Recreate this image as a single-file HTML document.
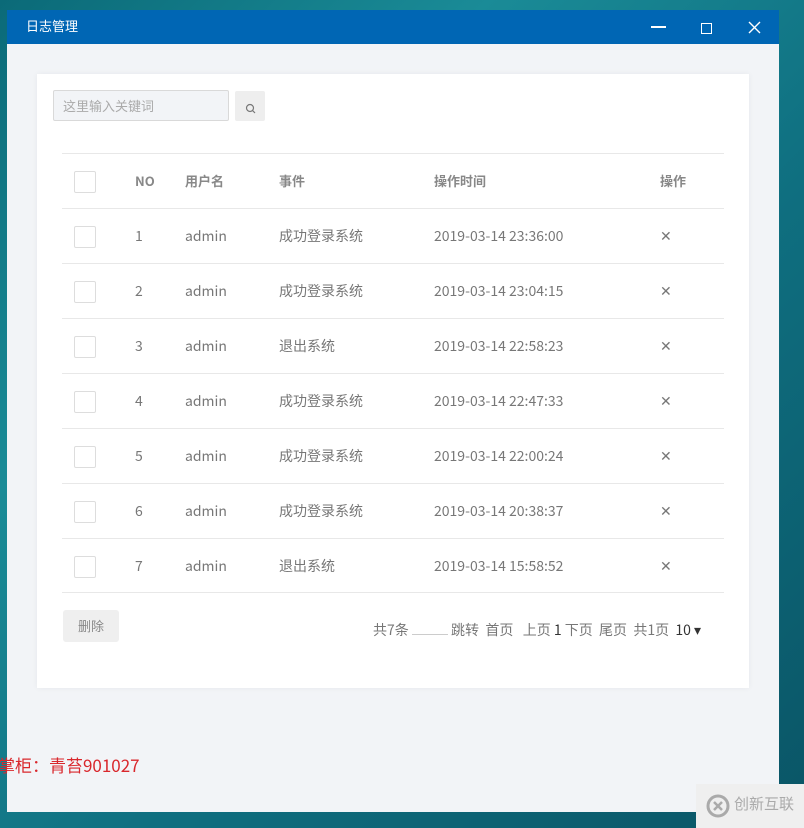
<!DOCTYPE html>
<html><head><meta charset="utf-8"><style>
*{margin:0;padding:0;box-sizing:border-box}
body{width:804px;height:828px;overflow:hidden;position:relative;font-family:"Noto Sans CJK SC","Liberation Sans",sans-serif;
background:linear-gradient(135deg,#0b6a78 0%,#1a8b97 30%,#0f6f80 60%,#0a5566 100%);}
.win{position:absolute;left:7px;top:10px;width:772px;height:802px;background:#f2f4f7}
.tb{height:34px;background:#0066b4;position:relative;color:#fff}
.tb .t{position:absolute;left:19px;top:0;line-height:32px;font-size:13px}
.card{position:absolute;left:30px;top:64px;width:712px;height:614px;background:#fff;box-shadow:0 0 6px rgba(0,0,0,.05)}
.inp{position:absolute;left:16px;top:16px;width:176px;height:31px;border:1px solid #d9d9d9;background:#f2f4f7;border-radius:2px;font-size:13px;color:#aaa;padding-left:9px;line-height:29px}
.sb{position:absolute;left:198px;top:17px;width:30px;height:30px;background:#eee;border-radius:2px;text-align:center;line-height:30px}
.tbl{position:absolute;left:25px;top:79px;width:662px}
.row{height:55px;border-top:1px solid #e8e8e8;position:relative;font-size:14px;color:#777}
.row:last-child{border-bottom:1px solid #e8e8e8}
.row span{position:absolute;top:0;line-height:54px}
.cb{position:absolute;left:12px;top:17px;width:22px;height:22px;border:1px solid #ddd;border-radius:2px}
.h{font-weight:bold;color:#888;font-size:13px}
.del{position:absolute;left:26px;top:536px;width:56px;height:32px;background:#efefef;border-radius:3px;font-size:13px;color:#888;text-align:center;line-height:32px}
.pg{position:absolute;left:336px;top:546px;line-height:20px;font-size:14px;color:#777;white-space:nowrap}
.red{position:absolute;left:-2px;top:752px;line-height:26px;color:#d9272c;font-size:17px}
.wm{position:absolute;left:696px;top:784px;width:108px;height:44px;background:#efefef;color:#aaa;font-size:15px}
</style></head><body>
<div class="win">
 <div class="tb"><span class="t">日志管理</span>
  <div style="position:absolute;left:644px;top:16px;width:15px;height:2px;background:#fff"></div>
  <div style="position:absolute;left:694px;top:13px;width:11px;height:11px;border:1px solid #fff"></div>
  <svg style="position:absolute;left:741px;top:11px" width="13" height="13"><path d="M1 1L12 12M12 1L1 12" stroke="#fff" stroke-width="1.4"/></svg>
 </div>
 <div class="card">
  <div class="inp">这里输入关键词</div>
  <div class="sb"><svg width="11" height="11" style="vertical-align:middle"><circle cx="5" cy="5" r="3.5" fill="none" stroke="#777" stroke-width="1.2"/><path d="M7.5 7.5L10 10" stroke="#777" stroke-width="1.2"/></svg></div>
  <div class="tbl">
   <div class="row h"><div class="cb"></div><span style="left:73px">NO</span><span style="left:123px">用户名</span><span style="left:217px">事件</span><span style="left:372px">操作时间</span><span style="left:598px">操作</span></div>
   <div class="row"><div class="cb"></div><span style="left:73px">1</span><span style="left:123px">admin</span><span style="left:217px">成功登录系统</span><span style="left:372px">2019-03-14 23:36:00</span><span style="left:598px">✕</span></div>
   <div class="row"><div class="cb"></div><span style="left:73px">2</span><span style="left:123px">admin</span><span style="left:217px">成功登录系统</span><span style="left:372px">2019-03-14 23:04:15</span><span style="left:598px">✕</span></div>
   <div class="row"><div class="cb"></div><span style="left:73px">3</span><span style="left:123px">admin</span><span style="left:217px">退出系统</span><span style="left:372px">2019-03-14 22:58:23</span><span style="left:598px">✕</span></div>
   <div class="row"><div class="cb"></div><span style="left:73px">4</span><span style="left:123px">admin</span><span style="left:217px">成功登录系统</span><span style="left:372px">2019-03-14 22:47:33</span><span style="left:598px">✕</span></div>
   <div class="row"><div class="cb"></div><span style="left:73px">5</span><span style="left:123px">admin</span><span style="left:217px">成功登录系统</span><span style="left:372px">2019-03-14 22:00:24</span><span style="left:598px">✕</span></div>
   <div class="row"><div class="cb"></div><span style="left:73px">6</span><span style="left:123px">admin</span><span style="left:217px">成功登录系统</span><span style="left:372px">2019-03-14 20:38:37</span><span style="left:598px">✕</span></div>
   <div class="row"><div class="cb"></div><span style="left:73px">7</span><span style="left:123px">admin</span><span style="left:217px">退出系统</span><span style="left:372px">2019-03-14 15:58:52</span><span style="left:598px">✕</span></div>
  </div>
  <div class="del">删除</div>
  <div class="pg">共7条 <span style="display:inline-block;width:36px;border-bottom:1px solid #ccc"></span> 跳转&nbsp; 首页 &nbsp;&nbsp;上页 <span style="color:#333">1</span> 下页&nbsp; 尾页&nbsp; 共1页&nbsp; <span style="color:#333">10 ▾</span></div>
 </div>
</div>
<div class="red">掌柜：青苔901027</div>
<div class="wm"><svg style="position:absolute;left:10px;top:10px" width="24" height="24"><circle cx="12" cy="12" r="10" fill="none" stroke="#aaa" stroke-width="3"/><path d="M8 8L16 16M16 8L8 16" stroke="#aaa" stroke-width="2.5"/></svg><span style="position:absolute;left:38px;top:9px">创新互联</span></div>
</body></html>
